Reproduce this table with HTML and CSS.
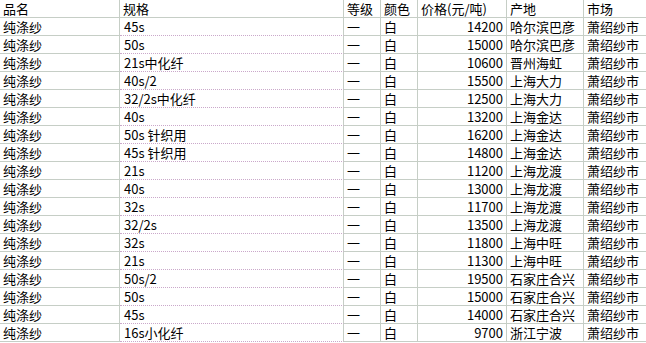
FILE: index.html
```html
<!DOCTYPE html>
<html lang="zh">
<head>
<meta charset="utf-8">
<title>纯涤纱价格</title>
<link rel="stylesheet" href="styles.css">
</head>
<body>
<div class="sheet">
  <div class="c h">品名</div><div class="c h">规格</div><div class="c h">等级</div><div class="c h">颜色</div><div class="c h">价格(元/吨)</div><div class="c h">产地</div><div class="c h last">市场</div>

  <div class="c">纯涤纱</div><div class="c spec">45s</div><div class="c">一</div><div class="c">白</div><div class="c num">14200</div><div class="c">哈尔滨巴彦</div><div class="c last">萧绍纱市</div>
  <div class="c">纯涤纱</div><div class="c spec">50s</div><div class="c">一</div><div class="c">白</div><div class="c num">15000</div><div class="c">哈尔滨巴彦</div><div class="c last">萧绍纱市</div>
  <div class="c">纯涤纱</div><div class="c spec">21s中化纤</div><div class="c">一</div><div class="c">白</div><div class="c num">10600</div><div class="c">晋州海虹</div><div class="c last">萧绍纱市</div>
  <div class="c">纯涤纱</div><div class="c spec">40s/2</div><div class="c">一</div><div class="c">白</div><div class="c num">15500</div><div class="c">上海大力</div><div class="c last">萧绍纱市</div>
  <div class="c">纯涤纱</div><div class="c spec">32/2s中化纤</div><div class="c">一</div><div class="c">白</div><div class="c num">12500</div><div class="c">上海大力</div><div class="c last">萧绍纱市</div>
  <div class="c">纯涤纱</div><div class="c spec">40s</div><div class="c">一</div><div class="c">白</div><div class="c num">13200</div><div class="c">上海金达</div><div class="c last">萧绍纱市</div>
  <div class="c">纯涤纱</div><div class="c spec">50s 针织用</div><div class="c">一</div><div class="c">白</div><div class="c num">16200</div><div class="c">上海金达</div><div class="c last">萧绍纱市</div>
  <div class="c">纯涤纱</div><div class="c spec">45s 针织用</div><div class="c">一</div><div class="c">白</div><div class="c num">14800</div><div class="c">上海金达</div><div class="c last">萧绍纱市</div>
  <div class="c">纯涤纱</div><div class="c spec">21s</div><div class="c">一</div><div class="c">白</div><div class="c num">11200</div><div class="c">上海龙渡</div><div class="c last">萧绍纱市</div>
  <div class="c">纯涤纱</div><div class="c spec">40s</div><div class="c">一</div><div class="c">白</div><div class="c num">13000</div><div class="c">上海龙渡</div><div class="c last">萧绍纱市</div>
  <div class="c">纯涤纱</div><div class="c spec">32s</div><div class="c">一</div><div class="c">白</div><div class="c num">11700</div><div class="c">上海龙渡</div><div class="c last">萧绍纱市</div>
  <div class="c">纯涤纱</div><div class="c spec">32/2s</div><div class="c">一</div><div class="c">白</div><div class="c num">13500</div><div class="c">上海龙渡</div><div class="c last">萧绍纱市</div>
  <div class="c">纯涤纱</div><div class="c spec">32s</div><div class="c">一</div><div class="c">白</div><div class="c num">11800</div><div class="c">上海中旺</div><div class="c last">萧绍纱市</div>
  <div class="c">纯涤纱</div><div class="c spec">21s</div><div class="c">一</div><div class="c">白</div><div class="c num">11300</div><div class="c">上海中旺</div><div class="c last">萧绍纱市</div>
  <div class="c">纯涤纱</div><div class="c spec">50s/2</div><div class="c">一</div><div class="c">白</div><div class="c num">19500</div><div class="c">石家庄合兴</div><div class="c last">萧绍纱市</div>
  <div class="c">纯涤纱</div><div class="c spec">50s</div><div class="c">一</div><div class="c">白</div><div class="c num">15000</div><div class="c">石家庄合兴</div><div class="c last">萧绍纱市</div>
  <div class="c">纯涤纱</div><div class="c spec">45s</div><div class="c">一</div><div class="c">白</div><div class="c num">14000</div><div class="c">石家庄合兴</div><div class="c last">萧绍纱市</div>
  <div class="c">纯涤纱</div><div class="c spec">16s小化纤</div><div class="c">一</div><div class="c">白</div><div class="c num">9700</div><div class="c">浙江宁波</div><div class="c last">萧绍纱市</div>
</div>
</body>
</html>
```

FILE: styles.css
```css
html, body {
  margin: 0;
  padding: 0;
  background: #ffffff;
}

.sheet {
  display: grid;
  grid-template-columns: 120px 224px 37px 37px 89px 77px 62px;
  grid-auto-rows: 18px;
  font-family: "Noto Sans CJK SC", "Noto Sans", sans-serif;
  font-size: 13px;
  color: #000000;
}

.c {
  box-sizing: border-box;
  border-right: 1px solid #c6cec6;
  border-bottom: 1px solid #c6cec6;
  padding: 0 0 0 3px;
  line-height: 17px;
  white-space: nowrap;
  overflow: hidden;
}

.c.last {
  border-right: none;
}

.c.spec {
  border-bottom: 1px dotted #caa8ca;
  padding-left: 4px;
}

.c.num {
  text-align: right;
  padding: 0 3px 0 0;
}
```
